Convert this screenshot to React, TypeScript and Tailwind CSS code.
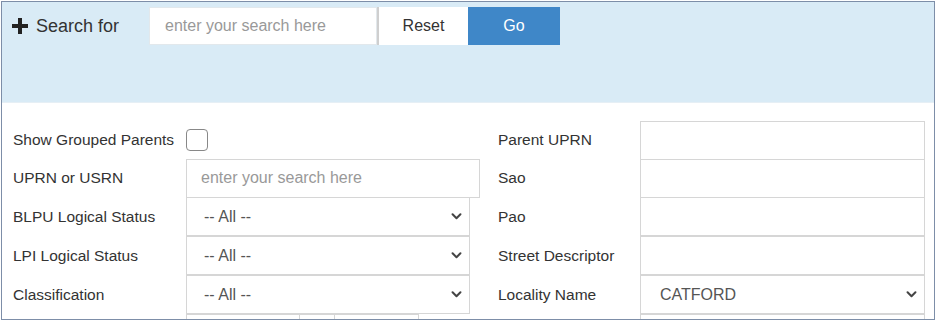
import React from 'react';

const font = { fontFamily: '"Liberation Sans", Arial, sans-serif' };

const Chevron = () => (
  <svg width="11" height="7" viewBox="0 0 12 8" className="shrink-0">
    <path d="M1.5 1.5 L6 6 L10.5 1.5" fill="none" stroke="#444" strokeWidth="2.3" strokeLinecap="round" strokeLinejoin="round" />
  </svg>
);

const TextBox = ({ placeholder, width }: { placeholder?: string; width: string }) => (
  <div className={`flex h-full items-center border border-[#d6d6d6] bg-white pl-[14px] text-[16px] text-[#999] ${width}`}>
    {placeholder}
  </div>
);

const Select = ({ value, width, pad }: { value: string; width: string; pad: string }) => (
  <div className={`flex h-full items-center justify-between border border-[#d6d6d6] bg-white pr-[7px] text-[16px] text-[#555] ${width} ${pad}`}>
    <span>{value}</span>
    <Chevron />
  </div>
);

const rowHeights = ['h-[38px]', 'h-[38px]', 'h-[39px]', 'h-[39px]', 'h-[39px]'];

export default function App() {
  const left: [string, React.ReactNode][] = [
    ['Show Grouped Parents', <div className="h-[22px] w-[22px] rounded-[4px] border border-[#888] bg-white" />],
    ['UPRN or USRN', <TextBox placeholder="enter your search here" width="w-[294px]" />],
    ['BLPU Logical Status', <Select value="-- All --" width="w-[284px]" pad="pl-[17px]" />],
    ['LPI Logical Status', <Select value="-- All --" width="w-[284px]" pad="pl-[17px]" />],
    ['Classification', <Select value="-- All --" width="w-[284px]" pad="pl-[17px]" />],
  ];
  const right: [string, React.ReactNode][] = [
    ['Parent UPRN', <TextBox width="w-[285px]" />],
    ['Sao', <TextBox width="w-[285px]" />],
    ['Pao', <TextBox width="w-[285px]" />],
    ['Street Descriptor', <TextBox width="w-[285px]" />],
    ['Locality Name', <Select value="CATFORD" width="w-[285px]" pad="pl-[19px]" />],
  ];

  return (
    <div className="bg-white p-[1px]" style={font}>
      <div className="h-[319px] w-[934px] overflow-hidden border border-[#7d8ea8] bg-white">
        {/* search header */}
        <div className="h-[101px] border-b border-[#e6eff5] bg-[#d9ebf6] pt-[5px]">
          <div className="flex items-center">
            <div className="flex w-[147px] items-center pl-[10px]">
              <svg width="16" height="16" viewBox="0 0 16 16" className="mr-[8px]">
                <path d="M6 0h4v6h6v4h-6v6h-4v-6h-6v-4h6z" fill="#222" />
              </svg>
              <span className="text-[18px] text-[#333]">Search for</span>
            </div>
            <div className="flex h-[38px] w-[228px] items-center border border-[#e2e8ec] bg-white pl-[15px] text-[16px] text-[#999]">
              enter your search here
            </div>
            <button className="h-[38px] w-[91px] border-l-2 border-[#cfcfcf] bg-white text-[16px] text-[#333]">Reset</button>
            <button className="h-[38px] w-[92px] bg-[#3f87c8] text-[16px] text-white">Go</button>
          </div>
        </div>

        {/* filter form */}
        <div className="flex pt-[18px]">
          <div className="ml-[11px] w-[485px]">
            {left.map(([l, c], i) => (
              <div key={l} className={`flex items-center ${rowHeights[i]}`}>
                <div className="w-[173px] text-[15.5px] text-[#333]">{l}</div>
                <div className={`flex items-center ${i === 0 ? '' : 'h-[39px]'}`}>{c}</div>
              </div>
            ))}
            <div className="flex h-[39px] pl-[173px]">
              <div className="h-[39px] w-[114px] border border-[#d6d6d6]" />
              <div className="h-[39px] w-[34px] border-y border-[#d6d6d6]" />
              <div className="h-[39px] w-[85px] border border-[#d6d6d6]" />
            </div>
          </div>
          <div className="w-[427px]">
            {right.map(([l, c], i) => (
              <div key={l} className={`flex items-center ${rowHeights[i]}`}>
                <div className="w-[142px] text-[15.5px] text-[#333]">{l}</div>
                <div className="flex h-[39px] items-center">{c}</div>
              </div>
            ))}
            <div className="flex h-[39px] pl-[142px]">
              <div className="h-[39px] w-[285px] border border-[#d6d6d6]" />
            </div>
          </div>
        </div>
      </div>
    </div>
  );
}
